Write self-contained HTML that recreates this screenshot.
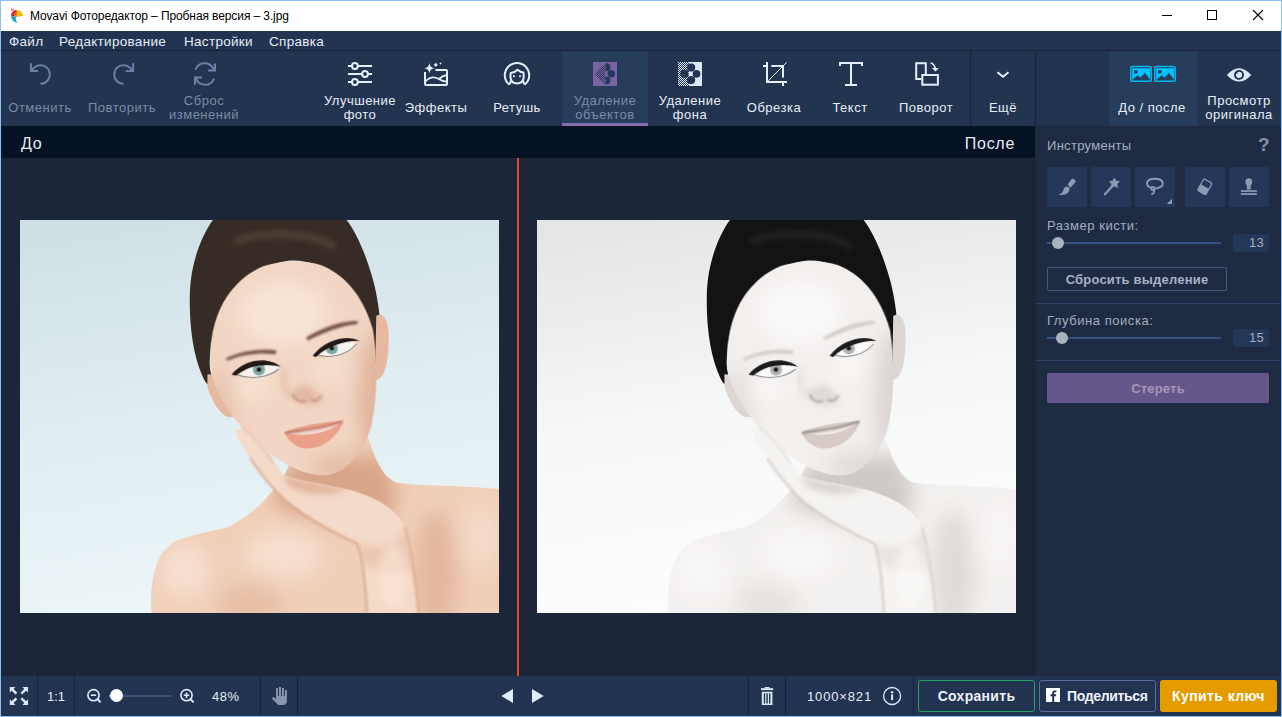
<!DOCTYPE html>
<html><head><meta charset="utf-8">
<style>
*{margin:0;padding:0;box-sizing:border-box}
html,body{width:1282px;height:717px;overflow:hidden}
body{position:relative;background:#8fbff0;font-family:"Liberation Sans",sans-serif;}
.a{position:absolute}
svg{position:absolute;overflow:visible}
#title{left:1px;top:1px;width:1280px;height:30px;background:#fff}
#menu{left:1px;top:31px;width:1280px;height:20px;background:#233452;border-bottom:1px solid #17233a}
#tool{left:1px;top:51px;width:1280px;height:75px;background:#223450}
#hdr{left:1px;top:126px;width:1034px;height:32px;background:#051224}
#canvas{left:1px;top:158px;width:1034px;height:518px;background:#1b2638}
#panel{left:1035px;top:126px;width:246px;height:550px;background:#1e2b43;border-left:1px solid #1a2639}
#bottom{left:1px;top:676px;width:1280px;height:40px;background:#223452}
.ttl{left:30px;top:9px;font-size:12px;color:#000;white-space:nowrap;letter-spacing:-0.1px}
.mi{color:#e6ecf5;font-size:13.5px;top:34px;letter-spacing:0.3px;white-space:nowrap;line-height:16px}
.tl{position:absolute;width:120px;color:#e8edf5;font-size:13px;letter-spacing:0.5px;text-align:center;line-height:14px;white-space:nowrap}
.s1{top:101px}
.s2{top:94px}
.dis{color:#7b8ca6}
.sel{background:#263d5c}
.tb{top:167px;width:40px;height:40px;background:#25385a;border-radius:2px}
.plab{left:1047px;font-size:13px;color:#a3aebf;letter-spacing:0.55px;line-height:16px}
.track{left:1047px;width:174px;height:2px;background:#36537f}
.knob{width:12px;height:12px;border-radius:50%;background:#aab2be}
.vbox{left:1233px;width:36px;height:18px;background:#233858;border-radius:2px;color:#a3aebf;font-size:13px;text-align:right;padding-right:5px;line-height:18px;letter-spacing:0.3px}
.sep{top:676px;width:1px;height:40px;background:#17233a}
.bt{top:689px;font-size:13px;color:#e6ecf5;line-height:16px}
</style></head><body>
<div id="title" class="a"></div>
<div class="a ttl">Movavi Фоторедактор – Пробная версия – 3.jpg</div>
<!-- window controls -->
<div class="a" style="left:1162px;top:15px;width:10px;height:1px;background:#000"></div>
<div class="a" style="left:1207px;top:10px;width:10px;height:10px;border:1px solid #000"></div>
<svg style="left:1252px;top:9px" width="12" height="12" viewBox="0 0 12 12"><path d="M1 1L11 11M11 1L1 11" stroke="#000" stroke-width="1.1"/></svg>

<div id="menu" class="a"></div>
<div class="a mi" style="left:9px">Файл</div>
<div class="a mi" style="left:59px">Редактирование</div>
<div class="a mi" style="left:184px">Настройки</div>
<div class="a mi" style="left:269px">Справка</div>

<div id="tool" class="a"></div>
<div class="a sel" style="left:562px;top:51px;width:86px;height:75px"></div>
<div class="a" style="left:562px;top:123px;width:86px;height:3px;background:#8a6bb0"></div>
<div class="a sel" style="left:1109px;top:51px;width:88px;height:75px"></div>
<div class="a" style="left:970px;top:51px;width:1px;height:75px;background:#17233a"></div>
<div class="a" style="left:1035px;top:51px;width:1px;height:75px;background:#17233a"></div>

<div class="tl s1 dis" style="left:-20px">Отменить</div>
<div class="tl s1 dis" style="left:62px">Повторить</div>
<div class="tl s2 dis" style="left:144px">Сброс<br>изменений</div>
<div class="tl s2" style="left:300px">Улучшение<br>фото</div>
<div class="tl s1" style="left:376px">Эффекты</div>
<div class="tl s1" style="left:457px">Ретушь</div>
<div class="tl s2 dis" style="left:545px">Удаление<br>объектов</div>
<div class="tl s2" style="left:630px">Удаление<br>фона</div>
<div class="tl s1" style="left:714px">Обрезка</div>
<div class="tl s1" style="left:790px">Текст</div>
<div class="tl s1" style="left:866px">Поворот</div>
<div class="tl s1" style="left:943px">Ещё</div>
<div class="tl s1" style="left:1092px">До / после</div>
<div class="tl s2" style="left:1179px">Просмотр<br>оригинала</div>


<!-- logo -->
<svg style="left:6px;top:4px" width="24" height="24" viewBox="0 0 24 24">
<path d="M5 12.5 Q5 7.5 9 6.2 L10.8 6 V12.5Z" fill="#e3222e"/>
<path d="M5.2 6.8 L4.9 3.2 L6.4 5 L7.2 3.4 L7.6 5.6 L9 6.2 Q6.5 6.8 5.6 8Z" fill="#ee6b74" opacity="0.75"/>
<path d="M10.8 6 Q15.8 6.2 17.4 11.6 Q15.5 12.8 10.8 12.5Z" fill="#fdbf08"/>
<path d="M11.5 11 Q14 11.8 16.5 11.4 Q14.5 12.6 11.5 12.4Z" fill="#f7a21b" opacity="0.8"/>
<path d="M5 12.5 H10.8 Q8.8 14.2 11 18.7 Q5.6 17.6 5 12.5Z" fill="#1ea5c4"/>
<path d="M8.5 14 Q9 16.5 11 18.7 Q9.2 16 9.8 13.2Z" fill="#58c2c0" opacity="0.8"/>
<circle cx="9.7" cy="10.6" r="1.3" fill="#d8d040"/><circle cx="9.8" cy="10.6" r="0.7" fill="#3a3010"/>
</svg>
<!-- undo -->
<svg style="left:25px;top:58px" width="30" height="32" viewBox="0 0 30 32" fill="none" stroke="#6a81a6" stroke-width="2">
<path d="M15.5 25.8 A9.3 9.3 0 1 0 8.9 9.9 L5.9 12.9"/><path d="M5.9 5.2 V12.9 H13.2"/>
</svg>
<!-- redo -->
<svg style="left:108px;top:58px" width="30" height="32" viewBox="0 0 30 32" fill="none" stroke="#6a81a6" stroke-width="2">
<g transform="translate(31 0) scale(-1 1)"><path d="M15.5 25.8 A9.3 9.3 0 1 0 8.9 9.9 L5.9 12.9"/><path d="M5.9 5.2 V12.9 H13.2"/></g>
</svg>
<!-- refresh -->
<svg style="left:190px;top:58px" width="32" height="32" viewBox="0 0 32 32" fill="none" stroke="#6a81a6" stroke-width="2">
<path d="M5.6 11.6 A9.6 9.6 0 0 1 23.8 12.2"/><path d="M25 5.4 V12.6 H17.9"/>
<path d="M24 20.6 A9.6 9.6 0 0 1 5.8 19.8"/><path d="M5 26.8 V19.6 H12"/>
</svg>
<!-- sliders -->
<svg style="left:344px;top:58px" width="32" height="32" viewBox="0 0 32 32" fill="none" stroke="#e6effc" stroke-width="2">
<path d="M4 8H8M13.8 8H28M4 16H18M23.8 16H28M4 24H8M13.8 24H28"/>
<circle cx="10.9" cy="8" r="2.9"/><circle cx="21" cy="16" r="2.9"/><circle cx="10.9" cy="24" r="2.9"/>
</svg>
<!-- effects -->
<svg style="left:420px;top:58px" width="32" height="32" viewBox="0 0 32 32" fill="none" stroke="#e6effc" stroke-width="2">
<path d="M15.4 12 H26 Q27 12 27 13 V26 Q27 27 26 27 H6 Q5 27 5 26 V14"/>
<path d="M5.5 23.4 C9 19.6 14 18.2 18.8 21 C21.2 22.6 24 23.6 26.5 23.6" stroke-width="1.7"/>
<path d="M18.8 21 C21 19.2 24 17.6 26.5 17.2" stroke-width="1.7"/>
<path d="M9.4 5 Q10 9.7 14.6 10.3 Q10 10.9 9.4 15.4 Q8.8 10.9 4.3 10.3 Q8.8 9.7 9.4 5Z" fill="#e6effc" stroke="none"/>
<path d="M15.8 4.6 Q16.1 6.6 18 6.9 Q16.1 7.2 15.8 9.2 Q15.5 7.2 13.6 6.9 Q15.5 6.6 15.8 4.6Z" fill="#e6effc" stroke="none"/>
<circle cx="15.8" cy="6.9" r="1.3" fill="#e6effc" stroke="none"/>
<path d="M20.5 4.1 Q20.7 5.2 21.8 5.4 Q20.7 5.6 20.5 6.7 Q20.3 5.6 19.2 5.4 Q20.3 5.2 20.5 4.1Z" fill="#e6effc" stroke="none"/>
</svg>
<!-- retouch -->
<svg style="left:500px;top:58px" width="32" height="32" viewBox="0 0 32 32" fill="none" stroke="#e6effc" stroke-width="2">
<path d="M9.2 26.6 A12.2 12.2 0 1 1 24.8 26.6"/>
<path d="M10.8 15 Q14.6 14.8 17.5 11.8 Q20.6 14.4 23.4 14.6 Q24 18 23.6 20 Q22.6 25.4 17 25.4 Q11.4 25.4 10.6 20 Q10.2 18 10.8 15Z"/>
<path d="M11 22.4 Q10.6 25 9.2 26.6 M23 22.4 Q23.4 25 24.8 26.6"/>
<rect x="13" y="17.3" width="1.8" height="1.8" fill="#e6effc" stroke="none"/><rect x="19.1" y="17.3" width="1.8" height="1.8" fill="#e6effc" stroke="none"/>
</svg>
<!-- object removal -->
<svg style="left:589px;top:58px" width="32" height="32" viewBox="0 0 32 32">
<defs><pattern id="dots1" width="2" height="2" patternUnits="userSpaceOnUse"><rect width="1" height="1" fill="#26395a"/><rect x="1" y="1" width="1" height="1" fill="#26395a"/></pattern>
<clipPath id="olh"><rect x="4" y="4" width="12.4" height="24"/></clipPath><clipPath id="orh"><rect x="16.4" y="4" width="12" height="24"/></clipPath></defs>
<rect x="4" y="4" width="24" height="24" fill="#7a63a2"/>
<g fill="#26395a" clip-path="url(#orh)"><circle cx="17.4" cy="9.2" r="3.9"/><circle cx="22.3" cy="15.8" r="3.7"/><circle cx="17.4" cy="22.4" r="3.9"/></g>
<g fill="url(#dots1)" clip-path="url(#olh)"><path d="M16.4 5.2 L10.5 10.5 L6 15.8 L10.5 21 L16.4 26.5Z"/></g>
</svg>
<!-- bg removal -->
<svg style="left:674px;top:58px" width="32" height="32" viewBox="0 0 32 32">
<defs><pattern id="dots2" width="2" height="2" patternUnits="userSpaceOnUse"><rect width="1" height="1" fill="#e0eafb"/><rect x="1" y="1" width="1" height="1" fill="#e0eafb"/></pattern></defs>
<rect x="4" y="4" width="11" height="24" fill="url(#dots2)"/>
<rect x="15" y="4" width="13" height="24" fill="#dde8fb"/>
<g fill="#223452"><circle cx="17.1" cy="9.6" r="4.1"/><circle cx="22.5" cy="15.8" r="3.9"/><circle cx="17.1" cy="22.1" r="4.1"/><circle cx="10.4" cy="15.8" r="4.1"/></g>
<circle cx="16.6" cy="15.8" r="2.4" fill="url(#dots2)"/><circle cx="17" cy="15.8" r="1.3" fill="#dde8fb"/>
</svg>
<!-- crop -->
<svg style="left:759px;top:58px" width="32" height="32" viewBox="0 0 32 32" fill="none" stroke="#e6effc" stroke-width="2">
<path d="M4 8H8 M8 4V24H28 M24 24V28 M12.3 8H24V19.6"/>
<path d="M9 23 L27.7 4.3" stroke-width="1"/>
</svg>
<!-- text -->
<svg style="left:835px;top:58px" width="32" height="32" viewBox="0 0 32 32" fill="none" stroke="#e6effc" stroke-width="2">
<path d="M5 8V5H27V8 M16 5V27 M10 27H22"/>
</svg>
<!-- rotate -->
<svg style="left:911px;top:58px" width="32" height="32" viewBox="0 0 32 32" fill="none" stroke="#e6effc" stroke-width="2">
<path d="M10.3 20.9 H5.2 V5.2 H14.8 V16"/>
<rect x="11.3" y="17" width="15.6" height="9.7"/>
<path d="M19.6 5 Q23.5 6 24.2 10.5" stroke-width="1.8"/>
<path d="M21 10 H27.9 L24.5 13.6Z" fill="#e6effc" stroke="none"/>
</svg>
<!-- chevron -->
<svg style="left:990px;top:62px" width="26" height="24" viewBox="0 0 26 24" fill="none" stroke="#e6effc" stroke-width="2">
<path d="M7.5 10.2 L13 14.8 L18.5 10.2"/>
</svg>
<!-- before/after -->
<svg style="left:1125px;top:60px" width="56" height="28" viewBox="0 0 56 28">
<g><rect x="5.8" y="6.6" width="20.4" height="14.6" rx="1.8" fill="none" stroke="#00b8f0" stroke-width="1.5"/>
<path d="M7.2 8.2 H24.6 Q25.1 8.2 25.1 8.7 V19.6 L19.9 12.7 L15.7 17.5 L12.7 15.3 L7.2 20 V8.7 Q7.2 8.2 7.7 8.2Z" fill="#00c3fa"/>
<circle cx="10.9" cy="11.8" r="1.9" fill="#263d5c"/></g>
<g transform="translate(24 0)"><rect x="5.8" y="6.6" width="20.4" height="14.6" rx="1.8" fill="none" stroke="#00b8f0" stroke-width="1.5"/>
<path d="M7.2 8.2 H24.6 Q25.1 8.2 25.1 8.7 V19.6 L19.9 12.7 L15.7 17.5 L12.7 15.3 L7.2 20 V8.7 Q7.2 8.2 7.7 8.2Z" fill="#00c3fa"/>
<circle cx="10.9" cy="11.8" r="1.9" fill="#263d5c"/></g>

</svg>
<!-- eye -->
<svg style="left:1222px;top:62px" width="34" height="26" viewBox="0 0 34 26">
<path d="M4.9 12.9 Q17 -0.5 29.2 12.9 Q17 26.3 4.9 12.9Z" fill="#dde8fb"/>
<circle cx="17" cy="12.9" r="4" fill="none" stroke="#1e2d48" stroke-width="1.9"/>
<path d="M13.6 10.6 L15.3 12.2 L15.6 9" fill="#1e2d48"/>
</svg>

<div id="hdr" class="a"></div>
<div id="canvas" class="a"></div>
<div id="panel" class="a"></div>
<div id="bottom" class="a"></div>
<div class="a" style="left:21px;top:134px;font-size:16px;letter-spacing:0.7px;color:#e8edf5;line-height:20px">До</div>
<div class="a" style="left:915px;width:100px;text-align:right;top:134px;font-size:16px;letter-spacing:0.7px;color:#e8edf5;line-height:20px">После</div>
<div class="a" style="left:517px;top:158px;width:2px;height:518px;background:#e24a2e"></div>

<!-- bottom icons -->
<svg style="left:0px;top:678px" width="37" height="36" viewBox="0 0 37 36">
<g fill="#dde8fb"><path d="M9.8 9 H15.4 L9.8 14.6Z"/><path d="M28 9 V14.6 L22.4 9Z"/><path d="M9.8 26.9 V21.3 L15.4 26.9Z"/><path d="M28 26.9 H22.4 L28 21.3Z"/></g>
<g stroke="#dde8fb" stroke-width="2.6"><path d="M11.5 10.7 L16.4 15.6 M26.3 10.7 L21.4 15.6 M11.5 25.2 L16.4 20.3 M26.3 25.2 L21.4 20.3"/></g>
</svg>
<svg style="left:80px;top:678px" width="30" height="36" viewBox="0 0 30 36" fill="none" stroke="#dde8fb" stroke-width="1.6">
<circle cx="13.5" cy="17.2" r="5.6"/><path d="M17.6 21.3 L20.6 24.4" stroke-width="2"/><path d="M10.8 17.2 H16.2"/>
</svg>
<svg style="left:173px;top:678px" width="30" height="36" viewBox="0 0 30 36" fill="none" stroke="#dde8fb" stroke-width="1.6">
<circle cx="13.5" cy="17.2" r="5.6"/><path d="M17.6 21.3 L20.6 24.4" stroke-width="2"/><path d="M10.8 17.2 H16.2 M13.5 14.5 V19.9"/>
</svg>
<div class="a" style="left:109px;top:695px;width:62px;height:2px;background:#3b5377"></div>
<div class="a" style="left:109px;top:695px;width:4px;height:2px;background:#12a8ef"></div>
<div class="a" style="left:110px;top:689px;width:13px;height:13px;border-radius:50%;background:#ffffff"></div>
<svg style="left:265px;top:682px" width="30" height="28" viewBox="0 0 30 28" fill="#8796ad">
<path d="M11 6 H12.9 V14 H13.9 V5 H16 V14 H17 V6 H18.9 V14 H19.9 V8 H21.9 V20.5 L19.5 23 H13.3 L7.6 17.2 Q6.9 16.3 7.4 15.5 Q8.2 14.6 9.1 15.3 L11 17Z"/>
</svg>
<svg style="left:495px;top:680px" width="55" height="32" viewBox="0 0 55 32" fill="#e0ebfc">
<path d="M6.3 15.9 L18 8.9 V23Z"/><path d="M37 8.9 L48.7 15.9 L37 23Z"/>
</svg>
<svg style="left:750px;top:680px" width="30" height="32" viewBox="0 0 30 32" fill="#dde8fb">
<rect x="11" y="8.2" width="12.2" height="1.9"/><rect x="14.6" y="7" width="5" height="1.5" rx="0.7"/>
<path d="M11.8 11.8 H22.4 V25 H11.8Z M13.8 13.2 V23.6 H15.2 V13.2Z M16.4 13.2 V23.6 H17.8 V13.2Z M19 13.2 V23.6 H20.4 V13.2Z" fill-rule="evenodd"/>
</svg>
<svg style="left:880px;top:684px" width="24" height="24" viewBox="0 0 24 24">
<circle cx="12.1" cy="12" r="8.5" fill="none" stroke="#dde8fb" stroke-width="1.3"/>
<circle cx="12.1" cy="8.3" r="1.2" fill="#dde8fb"/><rect x="11.1" y="10.4" width="2" height="5.8" fill="#dde8fb"/>
</svg>
<svg style="left:1046px;top:688px" width="14" height="14" viewBox="0 0 14 14">
<rect width="14" height="14" fill="#fff"/>
<path d="M8.2 14 V8.2 H10 L10.3 6.3 H8.2 V5.2 Q8.2 4.3 9.1 4.3 H10.4 V2.6 Q9.5 2.4 8.6 2.4 Q6.2 2.4 6.2 5 V6.3 H4.5 V8.2 H6.2 V14Z" fill="#233452"/>
</svg>

<!--PHOTOS-->
<div class="a" style="left:20px;top:220px;width:479px;height:393px;overflow:hidden"><svg style="left:0;top:0" width="479" height="393" viewBox="0 0 874 717" preserveAspectRatio="none">
<defs>
<linearGradient id="bgL" x1="0.2" y1="0" x2="0.4" y2="1"><stop offset="0" stop-color="#cfe0e5"/><stop offset="0.5" stop-color="#e0edf1"/><stop offset="1" stop-color="#edf6f9"/></linearGradient>
<filter id="blL" x="-50%" y="-50%" width="200%" height="200%"><feGaussianBlur stdDeviation="18"/></filter>
<filter id="bsL" x="-50%" y="-50%" width="200%" height="200%"><feGaussianBlur stdDeviation="6"/></filter>
<filter id="btL" x="-20%" y="-20%" width="140%" height="140%"><feGaussianBlur stdDeviation="1.6"/></filter>
<clipPath id="cbL"><path d="M240 717 C236 650 250 598 292 583 C330 570 360 565 378 561 C410 545 435 525 454 502 C475 480 495 450 500 420 L630 380 C645 430 660 472 690 480 C720 484 750 484 780 485 C830 487 860 490 874 491 L874 717Z"/></clipPath>
<clipPath id="cfL"><path d="M350 215 C360 150 395 105 444 84 C475 74 520 72 548 82 C590 98 625 135 644 200 C654 260 652 330 640 380 C625 425 595 462 560 466 C515 468 470 440 430 405 C395 372 362 325 352 290 C345 260 346 240 350 215Z"/></clipPath>
<clipPath id="chL"><path d="M394 384 C402 376 420 386 438 404 C456 424 468 448 480 466 C520 478 560 482 600 492 C650 505 690 530 702 560 C714 600 722 670 727 717 L633 717 C630 660 625 612 615 590 C570 570 520 540 488 515 C462 492 440 465 420 435 C406 412 394 396 394 384Z"/></clipPath>
</defs>
<rect width="874" height="717" fill="url(#bgL)"/>
<!-- body -->
<g clip-path="url(#cbL)">
<rect width="874" height="717" fill="#f0cfb8"/>
<g filter="url(#blL)">
<path d="M500 430 L670 430 C690 490 700 540 650 560 C590 560 520 540 460 520Z" fill="#d29a7c" opacity="0.8"/>
<ellipse cx="760" cy="640" rx="40" ry="110" fill="#d29a7c" opacity="0.45"/>
<ellipse cx="420" cy="700" rx="60" ry="40" fill="#d29a7c" opacity="0.3"/>
<ellipse cx="480" cy="610" rx="70" ry="45" fill="#fae6d8" opacity="0.7"/>
<ellipse cx="300" cy="640" rx="45" ry="50" fill="#fae6d8" opacity="0.7"/>
<ellipse cx="840" cy="580" rx="40" ry="60" fill="#fae6d8" opacity="0.5"/>
</g>
</g>
<!-- hair -->
<path d="M352 0 L596 0 C615 25 632 65 645 112 C652 140 656 165 658 200 L662 262 L644 262 C636 200 620 140 590 108 C560 84 520 72 494 74 C450 78 400 105 372 150 C356 180 348 220 346 260 C346 275 350 290 356 305 L340 298 C318 260 308 200 310 130 C312 80 330 30 352 0Z" fill="#362b25"/>
<path d="M390 40 C440 20 530 20 575 50" stroke="#75604e" stroke-width="12" fill="none" opacity="0.45" filter="url(#bsL)"/>
<!-- ears -->
<path d="M650 175 C668 165 676 195 672 235 C670 272 662 292 648 292Z" fill="#e6b8a0"/>
<path d="M342 282 C356 276 374 318 392 358 C374 368 354 340 342 305Z" fill="#e6b8a0"/>
<!-- face -->
<g clip-path="url(#cfL)">
<rect width="874" height="717" fill="#f1d6c3"/>
<g filter="url(#blL)">
<ellipse cx="480" cy="170" rx="80" ry="60" fill="#fae6d8" opacity="0.9"/>
<ellipse cx="650" cy="330" rx="30" ry="130" fill="#d29a7c" opacity="0.6"/>
<ellipse cx="370" cy="330" rx="22" ry="60" fill="#d29a7c" opacity="0.4"/>
<ellipse cx="590" cy="450" rx="60" ry="25" fill="#d29a7c" opacity="0.45"/>
<ellipse cx="420" cy="305" rx="35" ry="25" fill="#fae6d8" opacity="0.8"/>
<ellipse cx="565" cy="270" rx="30" ry="22" fill="#fae6d8" opacity="0.8"/>
</g>
</g>
<!-- hand -->
<g clip-path="url(#chL)">
<rect width="874" height="717" fill="#f4dac8"/>
<g filter="url(#bsL)">
<path d="M478 466 C520 478 560 482 600 492 C560 505 520 500 490 485Z" fill="#d29a7c" opacity="0.6"/>
<path d="M615 590 C650 605 690 595 705 560 L715 640 C690 650 650 640 630 630Z" fill="#d29a7c" opacity="0.3"/>
<ellipse cx="680" cy="650" rx="25" ry="60" fill="#fae6d8" opacity="0.6"/>
</g>
</g>
<g filter="url(#btL)" fill="none" stroke="#d29a7c" stroke-width="4" opacity="0.7">
<path d="M420 435 C440 465 462 492 488 515 C520 540 570 570 615 590 C625 612 630 660 633 717"/>
<path d="M702 560 C714 600 722 670 727 717" stroke-width="6" opacity="0.6"/>
<path d="M404 379 C422 390 442 412 462 444" stroke-width="3" opacity="0.5"/>
</g>
<!-- features -->
<g filter="url(#btL)">
<path d="M376 252 C405 238 442 234 468 238 L466 245 C440 242 405 244 378 257Z" fill="#7a5646"/>
<path d="M522 214 C552 196 586 184 616 184 L616 190 C586 192 554 206 525 220Z" fill="#7a5646"/>
<path d="M393 278 C416 255 455 255 474 270 C457 290 420 296 393 278Z" fill="#f6f2f0"/>
<path d="M540 244 C560 220 596 214 614 225 C602 248 565 255 540 244Z" fill="#f6f2f0"/>
</g>
<circle cx="436" cy="273" r="11" fill="#7fa9a8"/><circle cx="569" cy="234" r="11" fill="#7fa9a8"/>
<circle cx="436" cy="273" r="4" fill="#211816"/><circle cx="569" cy="234" r="4" fill="#211816"/>
<path d="M386 282 C410 252 455 249 476 268 C455 262 420 262 394 284Z" fill="#211816"/>
<path d="M534 248 C558 216 600 209 620 221 C600 219 562 228 540 250Z" fill="#211816"/>
<path d="M395 282 C420 292 452 288 472 272" fill="none" stroke="#211816" stroke-width="2" opacity="0.5"/>
<path d="M542 246 C566 254 598 246 614 226" fill="none" stroke="#211816" stroke-width="2" opacity="0.5"/>
<path d="M492 312 C500 335 522 345 550 332 C548 318 535 305 520 300Z" fill="#d29a7c" opacity="0.45" filter="url(#bsL)"/>
<path d="M482 388 C505 375 560 368 590 366 C580 398 550 418 520 417 C500 415 488 400 482 388Z" fill="#eba08a"/>
<path d="M488 389 C520 384 560 378 586 369 C560 390 520 396 488 389Z" fill="#f8e8e0" opacity="0.8"/>
<path d="M484 388 C515 386 555 380 588 368" fill="none" stroke="#8a4a3c" stroke-width="3" opacity="0.7" filter="url(#btL)"/>
<path d="M497 318 C502 330 512 334 522 330 M530 328 C538 332 546 328 550 320" fill="none" stroke="#8a4a3c" stroke-width="4" opacity="0.35" filter="url(#btL)"/>
<path d="M480 270 C478 290 482 310 492 322" fill="none" stroke="#d29a7c" stroke-width="8" opacity="0.35" filter="url(#bsL)"/>
</svg></div>
<div class="a" style="left:537px;top:220px;width:479px;height:393px;overflow:hidden"><svg style="left:0;top:0" width="479" height="393" viewBox="0 0 874 717" preserveAspectRatio="none">
<defs>
<linearGradient id="bgR" x1="0.2" y1="0" x2="0.4" y2="1"><stop offset="0" stop-color="#e4e6e6"/><stop offset="0.5" stop-color="#f6f7f7"/><stop offset="1" stop-color="#fdfdfd"/></linearGradient>
<filter id="blR" x="-50%" y="-50%" width="200%" height="200%"><feGaussianBlur stdDeviation="18"/></filter>
<filter id="bsR" x="-50%" y="-50%" width="200%" height="200%"><feGaussianBlur stdDeviation="6"/></filter>
<filter id="btR" x="-20%" y="-20%" width="140%" height="140%"><feGaussianBlur stdDeviation="1.6"/></filter>
<clipPath id="cbR"><path d="M240 717 C236 650 250 598 292 583 C330 570 360 565 378 561 C410 545 435 525 454 502 C475 480 495 450 500 420 L630 380 C645 430 660 472 690 480 C720 484 750 484 780 485 C830 487 860 490 874 491 L874 717Z"/></clipPath>
<clipPath id="cfR"><path d="M350 215 C360 150 395 105 444 84 C475 74 520 72 548 82 C590 98 625 135 644 200 C654 260 652 330 640 380 C625 425 595 462 560 466 C515 468 470 440 430 405 C395 372 362 325 352 290 C345 260 346 240 350 215Z"/></clipPath>
<clipPath id="chR"><path d="M394 384 C402 376 420 386 438 404 C456 424 468 448 480 466 C520 478 560 482 600 492 C650 505 690 530 702 560 C714 600 722 670 727 717 L633 717 C630 660 625 612 615 590 C570 570 520 540 488 515 C462 492 440 465 420 435 C406 412 394 396 394 384Z"/></clipPath>
</defs>
<rect width="874" height="717" fill="url(#bgR)"/>
<!-- body -->
<g clip-path="url(#cbR)">
<rect width="874" height="717" fill="#f3f1ef"/>
<g filter="url(#blR)">
<path d="M500 430 L670 430 C690 490 700 540 650 560 C590 560 520 540 460 520Z" fill="#c6bfbb" opacity="0.8"/>
<ellipse cx="760" cy="640" rx="40" ry="110" fill="#c6bfbb" opacity="0.45"/>
<ellipse cx="420" cy="700" rx="60" ry="40" fill="#c6bfbb" opacity="0.3"/>
<ellipse cx="480" cy="610" rx="70" ry="45" fill="#fbfaf9" opacity="0.7"/>
<ellipse cx="300" cy="640" rx="45" ry="50" fill="#fbfaf9" opacity="0.7"/>
<ellipse cx="840" cy="580" rx="40" ry="60" fill="#fbfaf9" opacity="0.5"/>
</g>
</g>
<!-- hair -->
<path d="M352 0 L596 0 C615 25 632 65 645 112 C652 140 656 165 658 200 L662 262 L644 262 C636 200 620 140 590 108 C560 84 520 72 494 74 C450 78 400 105 372 150 C356 180 348 220 346 260 C346 275 350 290 356 305 L340 298 C318 260 308 200 310 130 C312 80 330 30 352 0Z" fill="#131313"/>
<path d="M390 40 C440 20 530 20 575 50" stroke="#3a3a3a" stroke-width="12" fill="none" opacity="0.45" filter="url(#bsR)"/>
<!-- ears -->
<path d="M650 175 C668 165 676 195 672 235 C670 272 662 292 648 292Z" fill="#dcd6d2"/>
<path d="M342 282 C356 276 374 318 392 358 C374 368 354 340 342 305Z" fill="#dcd6d2"/>
<!-- face -->
<g clip-path="url(#cfR)">
<rect width="874" height="717" fill="#f2efed"/>
<g filter="url(#blR)">
<ellipse cx="480" cy="170" rx="80" ry="60" fill="#fbfaf9" opacity="0.9"/>
<ellipse cx="650" cy="330" rx="30" ry="130" fill="#c6bfbb" opacity="0.6"/>
<ellipse cx="370" cy="330" rx="22" ry="60" fill="#c6bfbb" opacity="0.4"/>
<ellipse cx="590" cy="450" rx="60" ry="25" fill="#c6bfbb" opacity="0.45"/>
<ellipse cx="420" cy="305" rx="35" ry="25" fill="#fbfaf9" opacity="0.8"/>
<ellipse cx="565" cy="270" rx="30" ry="22" fill="#fbfaf9" opacity="0.8"/>
</g>
</g>
<!-- hand -->
<g clip-path="url(#chR)">
<rect width="874" height="717" fill="#f5f3f1"/>
<g filter="url(#bsR)">
<path d="M478 466 C520 478 560 482 600 492 C560 505 520 500 490 485Z" fill="#c6bfbb" opacity="0.6"/>
<path d="M615 590 C650 605 690 595 705 560 L715 640 C690 650 650 640 630 630Z" fill="#c6bfbb" opacity="0.3"/>
<ellipse cx="680" cy="650" rx="25" ry="60" fill="#fbfaf9" opacity="0.6"/>
</g>
</g>
<g filter="url(#btR)" fill="none" stroke="#c6bfbb" stroke-width="4" opacity="0.7">
<path d="M420 435 C440 465 462 492 488 515 C520 540 570 570 615 590 C625 612 630 660 633 717"/>
<path d="M702 560 C714 600 722 670 727 717" stroke-width="6" opacity="0.6"/>
<path d="M404 379 C422 390 442 412 462 444" stroke-width="3" opacity="0.5"/>
</g>
<!-- features -->
<g filter="url(#btR)">
<path d="M376 252 C405 238 442 234 468 238 L466 245 C440 242 405 244 378 257Z" fill="#d2cdca"/>
<path d="M522 214 C552 196 586 184 616 184 L616 190 C586 192 554 206 525 220Z" fill="#d2cdca"/>
<path d="M393 278 C416 255 455 255 474 270 C457 290 420 296 393 278Z" fill="#fbfbfb"/>
<path d="M540 244 C560 220 596 214 614 225 C602 248 565 255 540 244Z" fill="#fbfbfb"/>
</g>
<circle cx="436" cy="273" r="11" fill="#b0b5b2"/><circle cx="569" cy="234" r="11" fill="#b0b5b2"/>
<circle cx="436" cy="273" r="4" fill="#1c1c1c"/><circle cx="569" cy="234" r="4" fill="#1c1c1c"/>
<path d="M386 282 C410 252 455 249 476 268 C455 262 420 262 394 284Z" fill="#1c1c1c"/>
<path d="M534 248 C558 216 600 209 620 221 C600 219 562 228 540 250Z" fill="#1c1c1c"/>
<path d="M395 282 C420 292 452 288 472 272" fill="none" stroke="#1c1c1c" stroke-width="2" opacity="0.5"/>
<path d="M542 246 C566 254 598 246 614 226" fill="none" stroke="#1c1c1c" stroke-width="2" opacity="0.5"/>
<path d="M492 312 C500 335 522 345 550 332 C548 318 535 305 520 300Z" fill="#c6bfbb" opacity="0.45" filter="url(#bsR)"/>
<path d="M482 388 C505 375 560 368 590 366 C580 398 550 418 520 417 C500 415 488 400 482 388Z" fill="#d6cac4"/>
<path d="M488 389 C520 384 560 378 586 369 C560 390 520 396 488 389Z" fill="#f7f3f1" opacity="0.8"/>
<path d="M484 388 C515 386 555 380 588 368" fill="none" stroke="#4a4442" stroke-width="3" opacity="0.7" filter="url(#btR)"/>
<path d="M497 318 C502 330 512 334 522 330 M530 328 C538 332 546 328 550 320" fill="none" stroke="#4a4442" stroke-width="4" opacity="0.35" filter="url(#btR)"/>
<path d="M480 270 C478 290 482 310 492 322" fill="none" stroke="#c6bfbb" stroke-width="8" opacity="0.35" filter="url(#bsR)"/>
</svg></div>
<!--/PHOTOS-->
<!-- panel -->
<div class="a" style="left:1047px;top:138px;font-size:13px;color:#a3aebf;letter-spacing:0.3px;line-height:16px">Инструменты</div>
<div class="a" style="left:1258px;top:134px;font-size:19px;color:#8391a7;line-height:22px;font-weight:bold">?</div>
<div class="a tb" style="left:1047px"></div><div class="a tb" style="left:1091px"></div><div class="a tb" style="left:1135px"></div><div class="a tb" style="left:1185px"></div><div class="a tb" style="left:1229px"></div>
<!-- panel tool icons -->
<svg style="left:1047px;top:167px" width="40" height="40" viewBox="0 0 40 40" fill="#8d9bb2">
<path d="M21 17.6 L24.4 12.6 Q25.4 11.5 26.6 12.2 L27.8 13.2 Q28.8 14.2 28 15.3 L23.4 20.6Z" stroke="#8d9bb2" stroke-width="0.6" stroke-linejoin="round"/>
<path d="M22.6 22.2 Q22.4 19.6 19.8 19.4 Q17.2 19.6 16.6 22.6 Q16 26 11.6 27.8 Q17.4 28.6 20.4 26.2 Q22.6 24.6 22.6 22.2Z"/>
</svg>
<svg style="left:1091px;top:167px" width="40" height="40" viewBox="0 0 40 40" fill="#8d9bb2">
<path d="M13.9 27.3 L21.2 19.3" stroke="#8d9bb2" stroke-width="2.1" stroke-linecap="round"/>
<path d="M23.40 11.00 L24.99 14.02 L28.35 14.59 L25.97 17.03 L26.46 20.41 L23.40 18.90 L20.34 20.41 L20.83 17.03 L18.45 14.59 L21.81 14.02Z" stroke="#8d9bb2" stroke-width="0.8" stroke-linejoin="round"/>
</svg>
<svg style="left:1135px;top:167px" width="40" height="40" viewBox="0 0 40 40" fill="none" stroke="#8d9bb2" stroke-width="1.9">
<path d="M16.4 21 Q12 19.6 12 16.6 Q12 11.8 19.9 11.8 Q27.8 11.8 27.8 16.6 Q27.8 20.6 20 21.6"/>
<circle cx="18" cy="21.5" r="1.6"/>
<path d="M18.4 23.2 Q19.6 24.6 18.6 25.8 Q17.8 26.8 16.4 27.2"/>
<path d="M31.8 37 L37 31.8 V37Z" fill="#8d9bb2" stroke="none"/>
</svg>
<svg style="left:1185px;top:167px" width="40" height="40" viewBox="0 0 40 40">
<g transform="rotate(30 19.8 19.8)"><rect x="15.1" y="13.2" width="9.4" height="13.2" rx="1.5" fill="none" stroke="#8d9bb2" stroke-width="1.3"/><path d="M15.1 19.6 H24.5 V25 Q24.5 26.4 23.1 26.4 H16.5 Q15.1 26.4 15.1 25Z" fill="#8d9bb2"/></g>
</svg>
<svg style="left:1229px;top:167px" width="40" height="40" viewBox="0 0 40 40" fill="#8d9bb2">
<path d="M19.8 11.2 Q23.2 11.2 23.2 14.8 Q23.2 17.2 21.6 18.8 L21.8 22.6 H17.8 L18 18.8 Q16.4 17.2 16.4 14.8 Q16.4 11.2 19.8 11.2Z"/>
<rect x="11.9" y="23.2" width="16" height="1.7"/><rect x="11.9" y="26.2" width="16" height="1.7"/>
</svg>

<div class="a plab" style="top:218px">Размер кисти:</div>
<div class="a track" style="top:242px"></div><div class="a knob" style="left:1052px;top:237px"></div>
<div class="a vbox" style="top:234px">13</div>
<div class="a" style="left:1047px;top:267px;width:180px;height:24px;border:1px solid #46597a;border-radius:2px;font-size:13px;font-weight:bold;color:#a8b2c2;text-align:center;line-height:24px;letter-spacing:0.2px">Сбросить выделение</div>
<div class="a" style="left:1035px;top:303px;width:246px;height:1px;background:#2c4264"></div>
<div class="a plab" style="top:313px">Глубина поиска:</div>
<div class="a track" style="top:337px"></div><div class="a knob" style="left:1056px;top:332px"></div>
<div class="a vbox" style="top:329px">15</div>
<div class="a" style="left:1035px;top:360px;width:246px;height:1px;background:#2c4264"></div>
<div class="a" style="left:1047px;top:373px;width:222px;height:30px;background:#66578a;border-radius:2px;font-size:13px;font-weight:bold;color:#a596bb;text-align:center;line-height:31px;letter-spacing:0.2px">Стереть</div>
<!-- bottom -->
<div class="a sep" style="left:37px"></div><div class="a sep" style="left:74px"></div><div class="a sep" style="left:260px"></div><div class="a sep" style="left:297px"></div>
<div class="a sep" style="left:748px"></div><div class="a sep" style="left:785px"></div><div class="a sep" style="left:913px"></div>
<div class="a bt" style="left:47px">1:1</div>
<div class="a bt" style="left:212px;letter-spacing:0.5px">48%</div>
<div class="a bt" style="left:807px;letter-spacing:0.85px">1000×821</div>
<div class="a" style="left:918px;top:680px;width:117px;height:32px;border:1px solid #21a464;border-radius:3px;font-size:14px;font-weight:bold;color:#eef2f8;text-align:center;line-height:30px;letter-spacing:0.3px">Сохранить</div>
<div class="a" style="left:1039px;top:680px;width:117px;height:32px;border:1px solid #5a6c98;border-radius:3px;font-size:14px;font-weight:bold;color:#eef2f8;line-height:30px;padding-left:27px;letter-spacing:-0.35px">Поделиться</div>
<div class="a" style="left:1160px;top:680px;width:117px;height:32px;background:#e39b00;border-radius:3px;font-size:14px;font-weight:bold;color:#ffffff;text-align:center;line-height:32px;letter-spacing:0.4px">Купить ключ</div>

</body></html>
